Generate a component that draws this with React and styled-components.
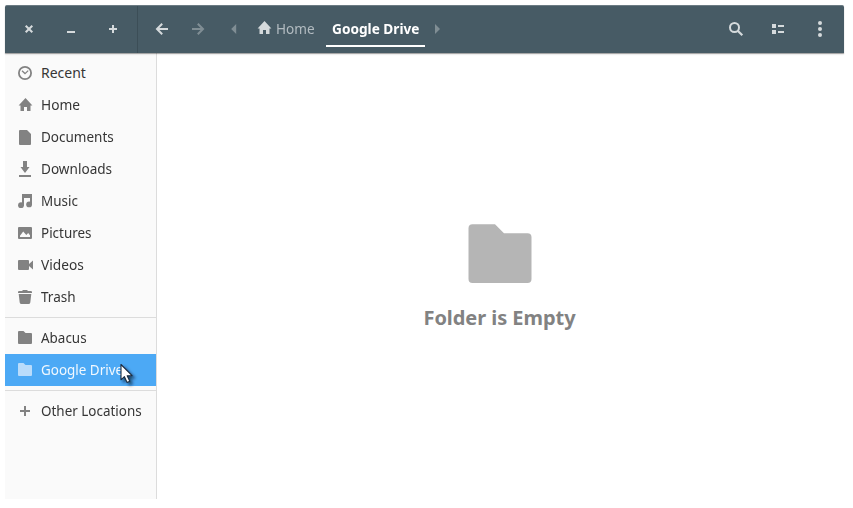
import React from "react";
import styled, { createGlobalStyle } from "styled-components";

const GlobalStyle = createGlobalStyle`
  * { box-sizing: border-box; }
  body {
    margin: 0;
    background: #fff;
    font-family: "Noto Sans", "Open Sans", sans-serif;
    font-size: 14px;
  }
`;

const Window = styled.div`
  display: flex;
  flex-direction: column;
  width: 839px;
  height: 494px;
  margin: 5px 0 0 5px;
`;

const HeaderBar = styled.header`
  position: relative;
  display: flex;
  height: 48px;
  flex: none;
  padding: 0 3px;
  background: #475b65;
  border-top: 1px solid #6b7b83;
  border-radius: 2px 2px 0 0;
  box-shadow: 0 1px 1px rgba(0, 0, 0, 0.34), 0 2px 2px rgba(0, 0, 0, 0.05);
  color: #d5dadc;
`;

const HeaderButton = styled.button`
  display: flex;
  align-items: center;
  justify-content: center;
  width: ${(p) => p.$width || 42}px;
  height: 46px;
  padding: 0;
  border: 0;
  background: none;
  color: inherit;
  opacity: ${(p) => (p.$dim ? 0.4 : 1)};
`;

const HeaderDivider = styled.div`
  width: 1px;
  margin: 0 6px 0 3px;
  background: #3c4e57;
`;

const Spacer = styled.div`
  flex: 1;
`;

const PathTab = styled.button`
  display: flex;
  align-items: center;
  width: ${(p) => p.$width}px;
  height: 41px;
  margin: 0 0 0 ${(p) => p.$gap || 0}px;
  padding: 5px 6px 0;
  border: 0;
  border-bottom: 2px solid ${(p) => (p.$active ? "#fff" : "transparent")};
  background: none;
  color: ${(p) => (p.$active ? "#fff" : "#b2bbc0")};
  font: ${(p) => (p.$active ? 700 : 400)} 14px "Noto Sans", sans-serif;
  white-space: nowrap;
`;

const Label = styled.span`
  display: inline-block;
  transform: scaleX(${(p) => p.$stretch || 1});
  transform-origin: left;
  white-space: nowrap;
`;

const Body = styled.div`
  display: flex;
  flex: 1;
`;

const Sidebar = styled.nav`
  width: 152px;
  flex: none;
  padding-top: 4px;
  background: #fafafa;
  border-right: 1px solid #dcdcdc;
`;

const Place = styled.div`
  display: flex;
  align-items: center;
  gap: 8px;
  height: 32px;
  padding-left: 12px;
  background: ${(p) => (p.$selected ? "#4ca9f5" : "transparent")};
  color: ${(p) => (p.$selected ? "#f1f8fe" : "#363636")};

  svg { color: ${(p) => (p.$selected ? "#b9dcfb" : "#828282")}; }
  ${Label} { padding-bottom: 2px; }
`;

const Separator = styled.div`
  height: 1px;
  margin: 4px 0;
  background: #dcdcdc;
`;

const Content = styled.main`
  display: flex;
  flex: 1;
  flex-direction: column;
  align-items: center;
  padding: 171px 2px 0 0;
`;

const EmptyTitle = styled.h1`
  margin: 20px 0 0;
  color: #828282;
  font-size: 20px;
  line-height: 28px;
  font-weight: 700;
  letter-spacing: -0.05px;
  white-space: nowrap;
`;

const Svg = styled.svg`
  display: block;
  flex: none;
`;

const PathIcon = styled(Svg)`
  margin: 0 4px 0 -2px;
`;

const Pointer = styled.svg`
  position: absolute;
  left: 116px;
  top: 360px;
`;

const shapes = {
  close: <path d="M4.700 4.700l6.600 6.600M11.300 4.700l-6.600 6.600" stroke="currentColor" strokeWidth="2" />,
  minimize: <path d="M4 10h8v2H4z" />,
  maximize: <path d="M7 4h2v3h3v2H9v3H7V9H4V7h3z" />,
  back: <path d="M14 8H3.200M8.200 2.800L3 8l5.200 5.200" fill="none" stroke="currentColor" strokeWidth="2" />,
  forward: <path d="M2 8h10.800M7.800 2.800L13 8l-5.200 5.200" fill="none" stroke="currentColor" strokeWidth="2" />,
  left: <path d="M10.200 3v10l-5-5z" />,
  right: <path d="M6 3v10l5-5z" />,
  search: (
    <>
      <circle cx="6.500" cy="6.500" r="4.500" fill="none" stroke="currentColor" strokeWidth="2" />
      <path d="M9.700 9.700l4.600 4.600" stroke="currentColor" strokeWidth="2.200" />
    </>
  ),
  list: <path d="M2 3h4v4H2zM8 4h6v2H8zM2 9h4v4H2zM8 10h6v2H8z" />,
  menu: (
    <>
      <circle cx="8" cy="2" r="2" />
      <circle cx="8" cy="8" r="2" />
      <circle cx="8" cy="14" r="2" />
    </>
  ),
  recent: (
    <g fill="none" stroke="currentColor">
      <circle cx="8" cy="8" r="6.100" strokeWidth="1.800" />
      <path d="M5 5.800l3 2.800 3.200-3" strokeWidth="1.300" />
    </g>
  ),
  home: <path d="M8.500 1L1.600 8.400H3.500V14h3.500V10h3v4h3.500V8.400h1.900z" />,
  document: <path d="M3 1h7l4 4v10a1 1 0 0 1-1 1H3a1 1 0 0 1-1-1V2a1 1 0 0 1 1-1z" />,
  download: <path d="M6 0h4v6h2.500L8 12 3.500 6H6zM2 14h12v2H2z" />,
  music: (
    <>
      <path d="M5 1h10v11h-2V5H7v7.500H5z" />
      <circle cx="4" cy="12.200" r="2.900" />
      <circle cx="12.100" cy="11.400" r="2.900" />
    </>
  ),
  pictures: (
    <path
      fillRule="evenodd"
      d="M2 2h12a1 1 0 0 1 1 1v10a1 1 0 0 1-1 1H2a1 1 0 0 1-1-1V3a1 1 0 0 1 1-1zM3 12h10v-1.700L11.200 8 9.300 10 6.200 6.600 3 10.700z"
    />
  ),
  video: <path d="M2 3h9a1 1 0 0 1 1 1v3l4-3.500v9L12 9v3a1 1 0 0 1-1 1H2a1 1 0 0 1-1-1V4a1 1 0 0 1 1-1z" />,
  trash: <path d="M1 4V2.800Q1 2 2.500 2H5l1-1h4l1 1h2.500Q15 2 15 2.800V4zM1.700 5h12.600l-1 8.500Q13 15 11.500 15h-7Q3 15 2.700 13.500z" />,
  folder: <path d="M2 1h4.500l2 2H14a1 1 0 0 1 1 1v9a1 1 0 0 1-1 1H2a1 1 0 0 1-1-1V2a1 1 0 0 1 1-1z" />,
  add: <path d="M7 3h2v4h4v2H9v4H7V9H3V7h4z" />,
};

const Icon = ({ name }) => (
  <Svg width="16" height="16" viewBox="0 0 16 16" fill="currentColor" aria-hidden="true">
    {shapes[name]}
  </Svg>
);

const groups = [
  [
    { icon: "recent", label: "Recent" },
    { icon: "home", label: "Home", stretch: 0.98 },
    { icon: "document", label: "Documents", stretch: 0.965 },
    { icon: "download", label: "Downloads", stretch: 0.97 },
    { icon: "music", label: "Music", stretch: 0.96 },
    { icon: "pictures", label: "Pictures", stretch: 0.96 },
    { icon: "video", label: "Videos", stretch: 0.98 },
    { icon: "trash", label: "Trash", stretch: 0.97 },
  ],
  [
    { icon: "folder", label: "Abacus", stretch: 0.96 },
    { icon: "folder", label: "Google Drive", stretch: 0.96, selected: true },
  ],
  [{ icon: "add", label: "Other Locations", stretch: 0.96 }],
];

export default function App() {
  return (
    <>
      <GlobalStyle />
      <Window>
        <HeaderBar>
          <HeaderButton><Icon name="close" /></HeaderButton>
          <HeaderButton><Icon name="minimize" /></HeaderButton>
          <HeaderButton><Icon name="maximize" /></HeaderButton>
          <HeaderDivider />
          <HeaderButton $width={36}><Icon name="back" /></HeaderButton>
          <HeaderButton $width={36} $dim><Icon name="forward" /></HeaderButton>
          <HeaderButton $width={36} $dim><Icon name="left" /></HeaderButton>
          <PathTab $width={68}>
            <PathIcon width="16" height="16" viewBox="0 0 16 16" fill="#d5dadc">
              {shapes.home}
            </PathIcon>
            <Label $stretch={0.97}>Home</Label>
          </PathTab>
          <PathTab $width={99} $gap={6} $active>
            <Label $stretch={0.975}>Google Drive</Label>
          </PathTab>
          <HeaderButton $width={24} $dim><Icon name="right" /></HeaderButton>
          <Spacer />
          <HeaderButton><Icon name="search" /></HeaderButton>
          <HeaderButton><Icon name="list" /></HeaderButton>
          <HeaderButton><Icon name="menu" /></HeaderButton>
        </HeaderBar>
        <Body>
          <Sidebar>
            {groups.map((group, i) => (
              <React.Fragment key={i}>
                {i > 0 && <Separator />}
                {group.map(({ icon, label, stretch, selected }) => (
                  <Place key={label} $selected={selected}>
                    <Icon name={icon} />
                    <Label $stretch={stretch}>{label}</Label>
                  </Place>
                ))}
              </React.Fragment>
            ))}
          </Sidebar>
          <Content>
            <Svg width="64" height="60" viewBox="0 0 64 60" fill="#b5b5b5">
              <path d="M4.500 0.300h22.500l9 9h23.500a4 4 0 0 1 4 4v41.700a4 4 0 0 1-4 4H4.500a4 4 0 0 1-4-4V4.300a4 4 0 0 1 4-4z" />
            </Svg>
            <EmptyTitle>Folder is Empty</EmptyTitle>
          </Content>
        </Body>
      </Window>
      <Pointer width="24" height="28" viewBox="0 0 24 28">
        <defs>
          <filter id="pointer-shadow" x="-50%" y="-50%" width="200%" height="200%">
            <feDropShadow dx="2.500" dy="2.500" stdDeviation="1.500" floodColor="#001428" floodOpacity="0.65" />
          </filter>
        </defs>
        <path
          d="M5 4.500v15.300l3.400-3.100 2.700 5.800 2.700-1.200-2.600-5.600h4.900z"
          fill="#fff"
          stroke="#1b2c40"
          strokeWidth="1.100"
          strokeLinejoin="round"
          filter="url(#pointer-shadow)"
        />
      </Pointer>
    </>
  );
}
